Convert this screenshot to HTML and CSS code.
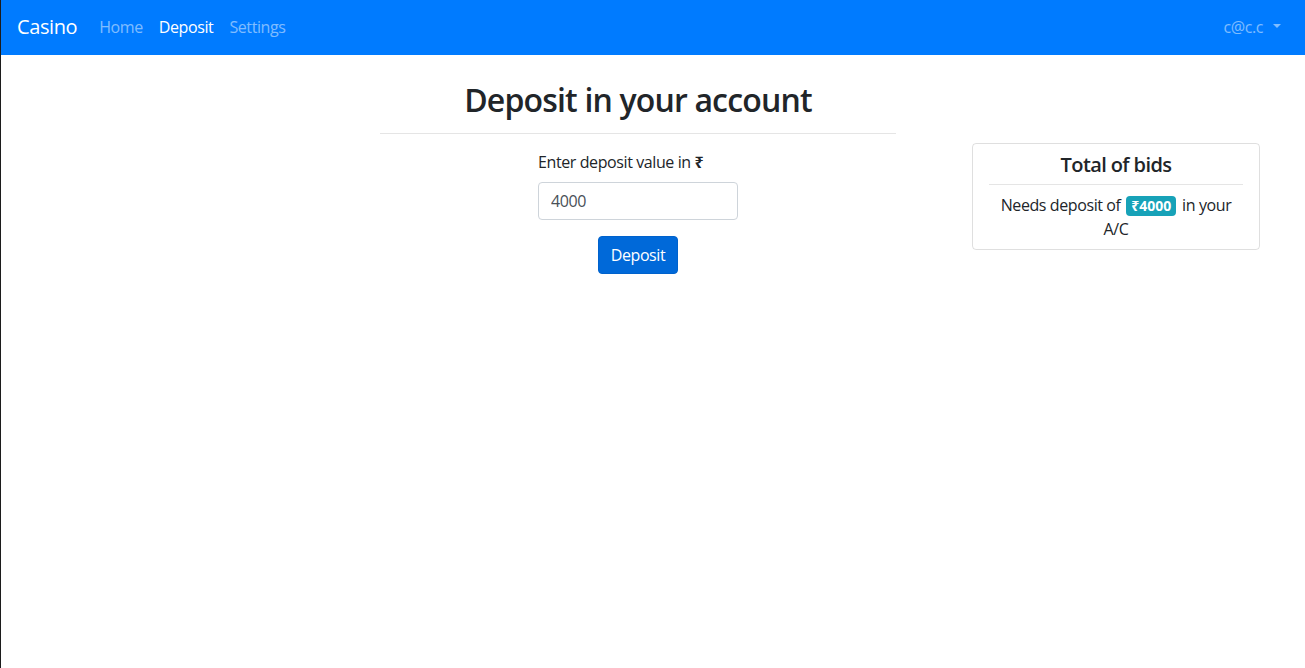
FILE: index.html
```html
<!DOCTYPE html>
<html lang="en">
<head>
<meta charset="utf-8">
<title>Casino - Deposit</title>
<link rel="stylesheet" href="styles.css">
</head>
<body>
<nav class="navbar">
  <a class="brand" href="#">Casino</a>
  <ul class="nav">
    <li><a class="nav-link" href="#">Home</a></li>
    <li><a class="nav-link active" href="#">Deposit</a></li>
    <li><a class="nav-link" href="#">Settings</a></li>
  </ul>
  <a class="nav-link user dropdown-toggle" href="#">c@c.c</a>
</nav>
<main class="page">
  <section class="deposit">
    <h2 class="title">Deposit in your account</h2>
    <hr class="rule">
    <form class="form">
      <label class="label" for="amount">Enter deposit value in <b>₹</b></label>
      <input class="input" id="amount" type="text" value="4000">
      <div class="actions"><button class="btn" type="button">Deposit</button></div>
    </form>
  </section>
  <aside class="card">
    <h5 class="card-title">Total of bids</h5>
    <hr class="card-rule">
    <p class="card-text">Needs deposit of <span class="badge">₹4000</span> in your A/C</p>
  </aside>
</main>
</body>
</html>
```

FILE: styles.css
```css
* { box-sizing: border-box; }
html, body { height: 100%; }
body {
  margin: 0;
  border-left: 1px solid #1c1c1c;
  font-family: "Open Sans", "Noto Sans", sans-serif;
  font-size: 16px;
  line-height: 1.5;
  letter-spacing: -0.025em;
  color: #212529;
  background: #fff;
}
a { text-decoration: none; }

.navbar {
  display: flex;
  align-items: center;
  height: 55px;
  padding: 0 16px 2px;
  background: #007bff;
}
.brand {
  color: #fff;
  font-size: 20px;
  line-height: 30px;
  margin-right: 14px;
}
.nav {
  display: flex;
  list-style: none;
  margin: 0;
  padding: 0;
  flex: 1;
}
.nav-link {
  display: block;
  padding: 8px;
  color: rgba(255,255,255,.5);
  font-size: 16px;
}
.nav-link.active { color: #fff; }
.user { margin-right: 8px; padding-right: 0; }
.dropdown-toggle::after {
  content: "";
  display: inline-block;
  margin-left: 10px;
  vertical-align: .255em;
  border-top: .3em solid;
  border-right: .3em solid transparent;
  border-left: .3em solid transparent;
  border-bottom: 0;
}

.page {
  display: flex;
  align-items: flex-start;
  gap: 76px;
  padding-left: 379px;
}
.deposit {
  width: 516px;
  padding-top: 26px;
  text-align: center;
}
.title {
  margin: 0;
  font-size: 32px;
  font-weight: 600;
  line-height: 38px;
  letter-spacing: -0.026em;
}
.rule {
  margin: 14px 0 0;
  border: 0;
  border-top: 1px solid rgba(0,0,0,.1);
}
.form {
  width: 200px;
  margin: 16px auto 0;
  text-align: left;
}
.label {
  display: block;
  margin-bottom: 8px;
}
.label b { font-weight: 700; }
.input {
  display: block;
  width: 200px;
  height: 38px;
  padding: 6px 12px;
  font: inherit;
  letter-spacing: inherit;
  color: #495057;
  border: 1px solid #ced4da;
  border-radius: 4px;
}
.actions {
  text-align: center;
  margin-top: 16px;
}
.btn {
  font: inherit;
  letter-spacing: inherit;
  color: #fff;
  background: #0069d9;
  border: 1px solid #0062cc;
  border-radius: 4px;
  height: 38px;
  padding: 6px 12px;
}

.card {
  margin-top: 88px;
  width: 288px;
  padding: 9px 16px 8px;
  border: 1px solid rgba(0,0,0,.125);
  border-radius: 4px;
  text-align: center;
}
.card-title {
  margin: 0;
  font-size: 20px;
  font-weight: 600;
  line-height: 24px;
  letter-spacing: -0.03em;
}
.card-rule {
  margin: 7px 0 8px;
  border: 0;
  border-top: 1px solid rgba(0,0,0,.1);
}
.card-text { margin: 0; }
.badge {
  display: inline-block;
  margin: 0 2px;
  padding: 1px 5px;
  font-size: 14px;
  font-weight: 700;
  line-height: 18px;
  letter-spacing: 0;
  color: #fff;
  background: #17a2b8;
  border-radius: 4px;
}
```
